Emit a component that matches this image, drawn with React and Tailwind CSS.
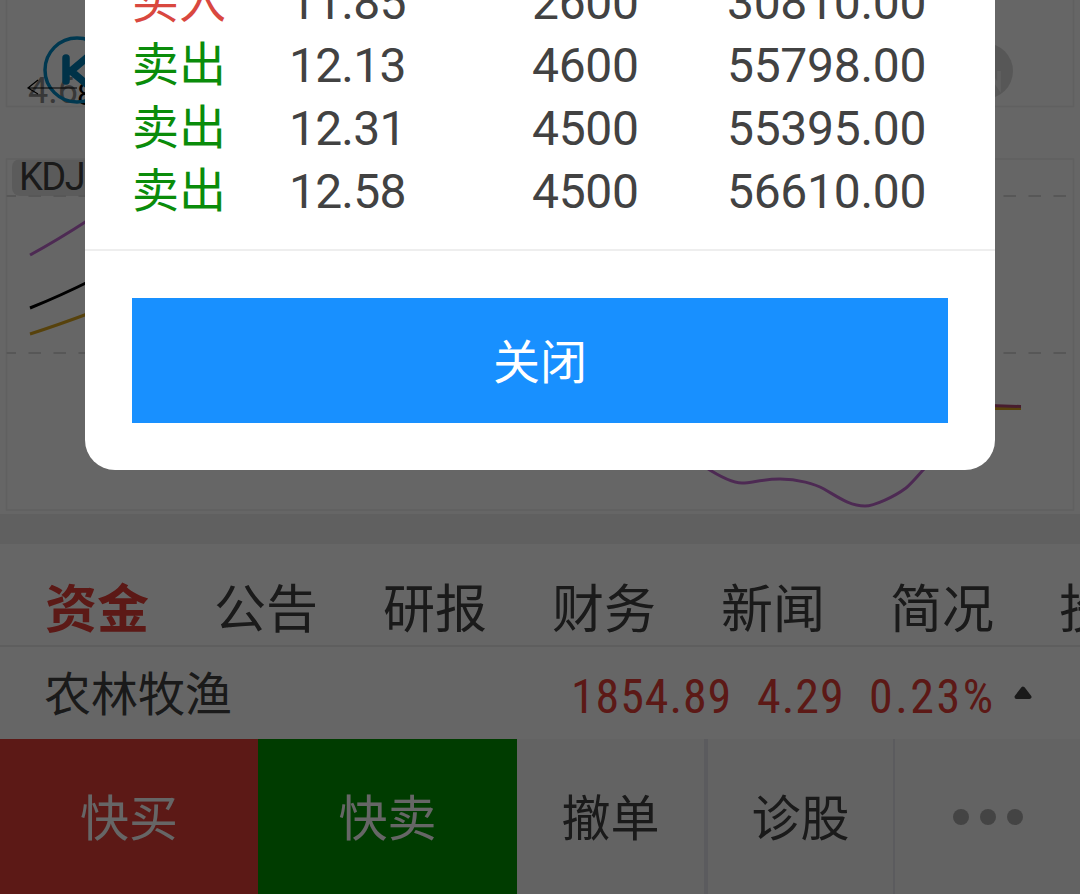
const trades = [
  { type: "买入", price: "11.85", amount: "2600", total: "30810.00" },
  { type: "卖出", price: "12.13", amount: "4600", total: "55798.00" },
  { type: "卖出", price: "12.31", amount: "4500", total: "55395.00" },
  { type: "卖出", price: "12.58", amount: "4500", total: "56610.00" },
];

const tabs = ["资金", "公告", "研报", "财务", "新闻", "简况", "投资"];

const Chart = () => (
  <div className="relative h-[514px] shrink-0">
    <span className="absolute left-[28px] top-[75px] text-[36px] leading-[32px] text-[#8c8c8c]">4.6</span>
    <span className="absolute left-[77px] top-[79px] text-[31px] leading-[32px] text-black">8</span>
    <span className="absolute left-[12px] top-[159px] h-[37px] w-[84px] rounded-lg bg-[#e4e4e4] pl-[7px] text-[38px] leading-[37px] tracking-[-1.5px] text-[#424242]">KDJ</span>
    <svg width="1080" height="514" viewBox="0 0 1080 514" fill="none" className="relative block">
      {/* panels */}
      <g stroke="#f0f0f0" strokeWidth="1.5">
        <path d="M6.5 0V106.5H1073.5V0" />
        <path d="M6.5 159H1073.5V510H6.5Z" />
      </g>
      <g stroke="#d9d9d9" strokeWidth="2" strokeDasharray="12.5 12.5" strokeDashoffset="3">
        <path d="M6.5 196H1073.5" />
        <path d="M6.5 353H1073.5" />
      </g>

      {/* KDJ lines */}
      <path d="M30 255Q56 241 90 219M705 467C722 478 734 483 742 483C752 483 762 479 780 479C798 479 815 484 824 489C838 497 850 506 865 506C874 506 894 497 906 488C914 481 918 475 926 467" stroke="#c06ad0" strokeWidth="3" />
      <path d="M30 308Q60 296 92 280" stroke="#000" strokeWidth="3" />
      <path d="M30 334Q58 325 90 313M990 408.500H1021" stroke="#d9a520" strokeWidth="3" />
      <path d="M990 405.500L1021 406.500" stroke="#b34a73" strokeWidth="3" />

      {/* logo */}
      <circle cx="77" cy="70" r="32" stroke="#008cc8" strokeWidth="3.500" />
      <path d="M66 58V81M90 55L71 71L90 87" stroke="#007db4" strokeWidth="7.500" strokeLinecap="round" />

      {/* news mark */}
      <circle cx="985" cy="71" r="28" fill="#dadada" />
      <path d="M988 71L999 87V71" stroke="#f0f0f0" strokeWidth="3.500" />

      {/* low price arrow */}
      <path d="M38 80L28 88L38 94M28 88H77" stroke="#000" strokeWidth="1.200" />
    </svg>
  </div>
);

const App = () => {
  return (
    <div className="relative flex h-[894px] w-[1080px] flex-col overflow-hidden bg-white font-[Roboto,'Noto_Sans_CJK_SC',sans-serif] text-[#424242]">
      <Chart />
      <div className="h-[30px] shrink-0 bg-[#f0f0f0]" />

      {/* TABS */}
      <div className="flex h-[103px] shrink-0 items-center gap-[65px] overflow-hidden border-b-2 border-[#ebebeb] pt-[33px] pl-[45px]">
        {tabs.map((t, i) => (
          <span key={t} className={`w-[104px] shrink-0 whitespace-nowrap text-[52px] leading-[60px] ${i === 0 ? "font-bold text-[#e54039]" : ""}`}>
            {t}
          </span>
        ))}
      </div>

      {/* SECTOR */}
      <div className="flex h-[92px] shrink-0 items-center pr-[48px] pl-[44px]">
        <span className="pt-[4px] text-[47px] leading-[60px]">农林牧渔</span>
        <div className="ml-auto flex pt-[7px] text-[48px] leading-[60px] text-[#e54039] font-['Roboto_Condensed',Roboto,sans-serif] font-stretch-condensed">
          <span className="w-[186px] tracking-[0.9px]">1854.89</span>
          <span className="w-[112px] tracking-[1px]">4.29</span>
          <span className="w-[126px] tracking-[2.5px]">0.23%</span>
        </div>
        <svg width="18" height="14" viewBox="0 0 18 14" className="ml-[19px]">
          <path d="M9 2.500L15.500 11H2.500Z" fill="#424242" stroke="#424242" strokeWidth="4" strokeLinejoin="round" />
        </svg>
      </div>

      {/* BOTTOM BAR */}
      <div className="flex h-[155px] shrink-0 bg-[#f8f8f8] text-[49px] *:pt-[6px]">
        <div className="flex w-[258px] items-center justify-center bg-[#e54039] text-white">快买</div>
        <div className="flex w-[259px] items-center justify-center bg-[#009600] text-white">快卖</div>
        <div className="flex w-[191px] items-center justify-center border-r-4 border-[#e4e4ec]">撤单</div>
        <div className="flex w-[187px] items-center justify-center border-r-2 border-[#e4e4ec]">诊股</div>
        <div className="flex flex-1 items-center justify-center gap-[11px]">
          <span className="mb-[6px] size-4 rounded-full bg-[#aaa]" />
          <span className="mb-[6px] size-4 rounded-full bg-[#aaa]" />
          <span className="mb-[6px] size-4 rounded-full bg-[#aaa]" />
        </div>
      </div>

      {/* MODAL */}
      <div className="absolute inset-0 flex items-start justify-center bg-black/60">
        <div className="flex h-[470px] w-[910px] flex-col justify-end overflow-hidden rounded-b-[30px] bg-white">
          <div className="border-b-2 border-[#eee] pb-[26px] pl-[47px]">
            {trades.map(t => (
              <div key={t.total} className="flex h-[63px] items-center text-[48px] leading-[63px] tracking-[-0.3px]">
                <span className={`w-[157px] pb-[2px] text-[47px] tracking-normal ${t.type === "买入" ? "text-[#d9483f]" : "text-[#0a8c0a]"}`}>{t.type}</span>
                <span className="w-[243px] tracking-[-0.8px]">{t.price}</span>
                <span className="w-[195px]">{t.amount}</span>
                <span>{t.total}</span>
              </div>
            ))}
          </div>
          <div className="p-[47px]">
            <button className="block h-[125px] w-full bg-[#1890ff] pt-[5px] text-[47px] text-white">关闭</button>
          </div>
        </div>
      </div>
    </div>
  );
};

export default App;
